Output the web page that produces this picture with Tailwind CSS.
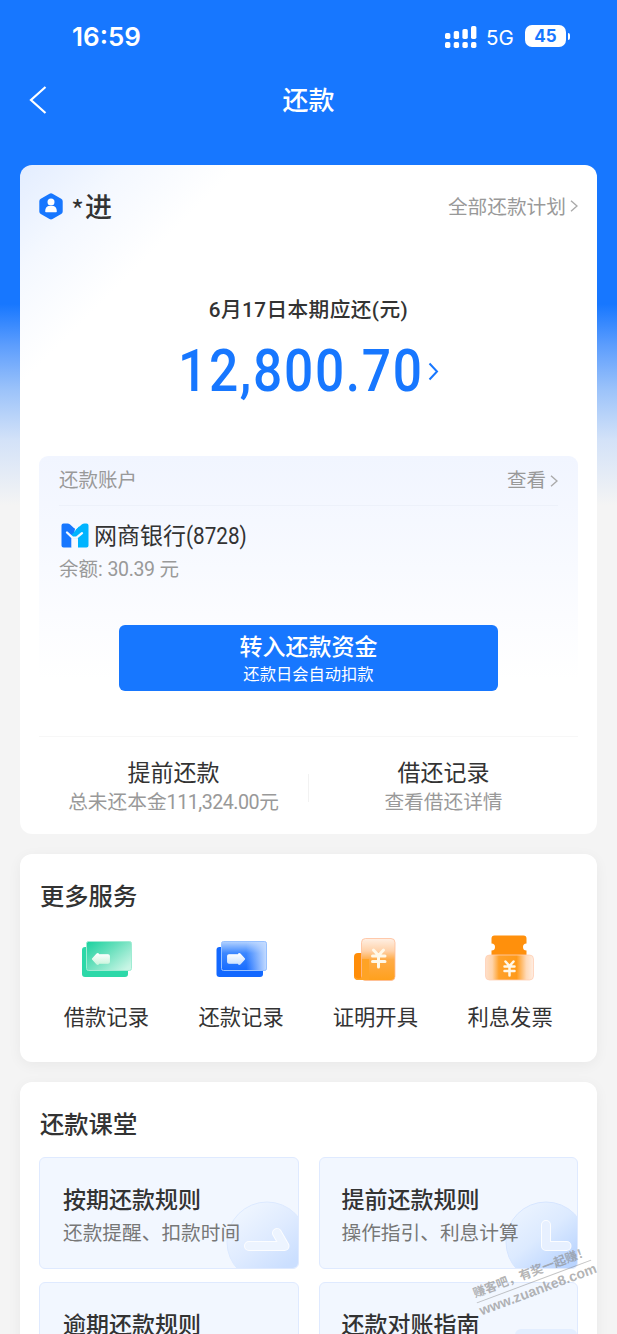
<!DOCTYPE html>
<html lang="zh-CN">
<head>
<meta charset="utf-8">
<meta name="viewport" content="width=device-width, initial-scale=1">
<title>还款</title>
<script src="https://cdn.jsdelivr.net/npm/@tailwindcss/browser@4"></script>
</head>
<body class="h-[1334px] overflow-hidden bg-[#f4f4f4] font-['Roboto','Noto_Sans_CJK_SC',sans-serif] text-[#333]">
<div class="relative h-[1334px] w-[617px] overflow-hidden bg-[linear-gradient(to_bottom,#1777ff_0px,#1777ff_304px,#5c9dfd_345px,#9cc3fa_390px,#d3e2f8_440px,#f4f4f4_505px)]">

  <!-- status bar -->
  <header class="flex h-[74px] items-center justify-between pr-[47px] pl-[72px] text-white">
    <div class="font-['Inter'] text-[26px] leading-[30px] font-semibold">16:59</div>
    <div class="flex items-center">
      <svg class="mt-[-3px] h-6 w-[34px]" viewBox="0 0 34 24" fill="#fff">
        <rect x="1" y="9" width="5.4" height="6" rx="1.7"/><rect x="9.700" y="7" width="5.400" height="8" rx="1.700"/><rect x="18.400" y="5" width="5.400" height="10" rx="1.700"/><rect x="27" y="2" width="5.400" height="13" rx="1.700"/>
        <rect x="1" y="18" width="5.400" height="6" rx="1.700"/><rect x="9.700" y="18" width="5.400" height="6" rx="1.700"/><rect x="18.400" y="18" width="5.400" height="6" rx="1.700"/><rect x="27" y="18" width="5.400" height="6" rx="1.700"/>
      </svg>
      <span class="mt-[2px] ml-[8px] w-[39px] font-['Inter'] text-[20.500px] leading-6">5G</span>
      <span class="mt-[-2px] flex h-[22px] w-[41px] items-center justify-center rounded-[7px] bg-white font-['Inter'] text-[17px] leading-none font-bold text-[#1777ff]">45</span>
      <span class="mt-[-1px] ml-[2px] h-[7px] w-[2px] rounded-r-full bg-white"></span>
    </div>
  </header>

  <!-- navigation -->
  <nav class="grid h-[52px] grid-cols-[60px_1fr_60px] items-center text-white">
    <svg class="mt-[-1px] ml-[29px] h-[28px] w-[18px]" viewBox="0 0 18 28" fill="none" stroke="#fff" stroke-width="2.200"><path d="M16.500 1 2 14l14.500 13"/></svg>
    <h1 class="mt-[2px] text-center text-[26px] leading-8 font-medium">还款</h1>
  </nav>

  <main class="mx-5 mt-[39px] flex flex-col gap-5">
    <!-- bill card -->
    <section class="h-[669px] rounded-[12px] bg-white bg-[linear-gradient(135deg,#e3edff_0px,#f4f8ff_75px,#ffffff_155px)] px-[19px]">
      <div class="flex h-[82px] items-center justify-between">
        <div class="flex items-center">
          <svg class="h-[27px] w-6" viewBox="0 0 24 27"><path d="M10.500.8a3 3 0 0 1 3 0l8.700 4.900a3 3 0 0 1 1.500 2.600v10.100a3 3 0 0 1-1.500 2.600l-8.700 5a3 3 0 0 1-3 0l-8.700-5a3 3 0 0 1-1.500-2.600V8.300a3 3 0 0 1 1.500-2.600z" fill="#1777ff"/><circle cx="12" cy="9" r="3.500" fill="#fff"/><path d="M6.200 18.500c0-3.800 2-5.400 4-5.400h3.600c2 0 4 1.600 4 5.400q0 .7-.8.700H7q-.8 0-.8-.7z" fill="#fff"/></svg>
          <span class="ml-[8px] flex items-center font-['Noto_Sans_CJK_SC'] text-[27px] leading-8 font-medium"><span class="mt-[6px] w-[14px] text-[28px] font-normal">*</span><span>进</span></span>
        </div>
        <a class="flex items-center text-[19.700px] leading-6 text-[#999]"><span class="mt-[3px]">全部还款计划</span><svg class="ml-1 h-3 w-2" viewBox="0 0 8 12" fill="none" stroke="#aaa" stroke-width="1.400"><path d="m1 .7 6 5.300-6 5.300"/></svg></a>
      </div>

      <div class="mt-[49px] flex h-7 items-center justify-center text-[20.700px] leading-7 font-medium tracking-[0.4px]">6月17日本期应还(元)</div>
      <div class="mt-[14px] flex h-[66px] items-center justify-center text-[#1777ff]">
        <span class="w-[245px] text-[58.500px] leading-[66px] font-medium whitespace-nowrap"><span class="inline-block origin-left scale-x-[0.88] tracking-[1.900px]">12,800.70</span></span>
        <svg class="ml-[5px] h-[19px] w-[11px]" viewBox="0 0 11 19" fill="none" stroke="#1777ff" stroke-width="2"><path d="m1.500 1.500 7.500 8-7.500 8"/></svg>
      </div>

      <div class="mt-[52px] flex h-[281px] flex-col rounded-t-[9px] border-b border-[#f7f7f7] bg-linear-to-b from-[#f1f5ff] to-white to-80% px-5">
        <div class="flex h-[50px] items-center justify-between border-b border-[#edf1fa] text-[19.500px] leading-6 text-[#999]">
          <span class="mt-[1px]">还款账户</span>
          <a class="flex items-center"><span class="mt-[1px]">查看</span><svg class="ml-1 h-3 w-2" viewBox="0 0 8 12" fill="none" stroke="#aaa" stroke-width="1.400"><path d="m1 .7 6 5.300-6 5.300"/></svg></a>
        </div>
        <div class="mt-[13px] flex h-8 items-center">
          <svg class="mr-[5px] ml-[2px] h-[25px] w-[28px]" viewBox="0 0 28 25">
            <path d="M2.500.5h4q1.500 0 2.600 1L14 6 6 9q3 3 4.500 6v9.500h-8Q.500 24.500.500 22.500v-20q0-2 2-2z" fill="#1777ff"/>
            <path d="M14.500 7 21 1.300q1-.8 2.500-.8h2q2 0 2 2v20q0 2-2 2h-8.500V15z" fill="#00b4ff"/>
            <path d="M4 8 14 5.500l-1 6-3 4z" fill="#1777ff"/><path d="M10 12.500 18 3.500l7 4-6.500 8h-6z" fill="#00b4ff"/>
            <path d="m6 9.500 5.500 5.200M11.500 14.700h4l5.500-4.500" fill="none" stroke="#f6f9ff" stroke-width="2.300" stroke-linecap="round" stroke-linejoin="round"/>
            <path d="M10.600 15.500h6.400v9h-6.400z" fill="#f6f9ff"/>
          </svg>
          <span class="mt-[3px] flex text-[23px] leading-8">网商银行<span class="origin-left scale-x-[0.9]">(8728)</span></span>
        </div>
        <div class="mt-[7px] text-[19.500px] leading-6 text-[#999]">余额: <span class="tracking-[-0.400px]">30.39</span> 元</div>
        <button class="mx-auto mt-[43px] flex h-[66px] w-[379px] flex-col items-center rounded-[6px] bg-[#1777ff] text-white">
          <span class="mt-[8px] text-[23px] leading-[30px] font-medium">转入还款资金</span>
          <span class="mt-[2px] text-[16.300px] leading-5">还款日会自动扣款</span>
        </button>
      </div>

      <div class="grid grid-cols-[269px_1px_1fr] text-center">
        <div class="pt-[22px]">
          <div class="text-[23px] leading-[30px]">提前还款</div>
          <div class="mt-[2px] text-[19.700px] leading-6 text-[#999]">总未还本金<span class="tracking-[-0.500px]">111,324.00</span>元</div>
        </div>
        <div class="mt-[37px] h-7 bg-[#f2f2f2]"></div>
        <div class="pt-[22px]">
          <div class="text-[23px] leading-[30px]">借还记录</div>
          <div class="mt-[2px] text-[19.700px] leading-6 text-[#999]">查看借还详情</div>
        </div>
      </div>
    </section>

    <!-- services -->
    <section class="h-[208px] rounded-[12px] bg-white px-[19px] pt-[28px] shadow-[0_3px_14px_rgba(0,0,0,0.05)]">
      <h2 class="ml-[1px] text-[24.300px] leading-[30px] font-medium">更多服务</h2>
      <div class="mt-[18px] grid grid-cols-4 text-[21.300px] leading-7">
        <div class="flex flex-col items-center">
          <svg class="h-[56px] w-[60px]" viewBox="0 0 60 56"><defs>
            <linearGradient id="g1" x1="0" y1="0" x2="1" y2=".8"><stop offset="0" stop-color="#19d29f"/><stop offset=".45" stop-color="#65dfbb"/><stop offset="1" stop-color="#c8f5e5"/></linearGradient>
            <linearGradient id="w1" x1="0" y1="0" x2="0" y2="1"><stop stop-color="#fff"/><stop offset="1" stop-color="#c9f5dd"/></linearGradient></defs>
            <rect x="6" y="17" width="46" height="30" rx="3" fill="#2cd8a8"/><rect x="10.500" y="11.500" width="45" height="29" rx="2" fill="url(#g1)" stroke="#9fecd3" stroke-width="1"/>
            <path d="m16.500 29 4.500-5q1.500-1 1.500.8h9.500q1.300 0 1.300 1.200v6q0 1.200-1.300 1.200h-9.500q0 1.800-1.500.8z" fill="url(#w1)" stroke="url(#w1)" stroke-width="1.200" stroke-linejoin="round"/></svg>
          <span class="mt-[18px]">借款记录</span>
        </div>
        <div class="flex flex-col items-center">
          <svg class="h-[56px] w-[60px]" viewBox="0 0 60 56"><defs>
            <linearGradient id="g2" x1="0" y1="0" x2="0" y2="1"><stop stop-color="#b5d3ff"/><stop offset=".4" stop-color="#3c87ff"/><stop offset="1" stop-color="#176bff"/></linearGradient>
            <linearGradient id="h2"><stop offset=".55" stop-color="#c4dbff" stop-opacity="0"/><stop offset="1" stop-color="#c4dbff"/></linearGradient>
            <linearGradient id="w2" x1="0" y1="0" x2="0" y2="1"><stop stop-color="#fff"/><stop offset="1" stop-color="#cbe1ff"/></linearGradient></defs>
            <rect x="5.500" y="17" width="46.500" height="30" rx="3" fill="#1268ff"/><rect x="10.500" y="11.500" width="45" height="29" rx="2" fill="url(#g2)"/><rect x="10.500" y="11.500" width="45" height="29" rx="2" fill="url(#h2)" stroke="#98c1ff" stroke-width="1"/>
            <path d="m33.500 29-4.500-5q-1.500-1-1.500.8H18q-1.300 0-1.300 1.200v6q0 1.200 1.300 1.200h9.500q0 1.800 1.500.8z" fill="url(#w2)" stroke="url(#w2)" stroke-width="1.200" stroke-linejoin="round"/></svg>
          <span class="mt-[18px]">还款记录</span>
        </div>
        <div class="flex flex-col items-center">
          <svg class="mr-[1px] h-[56px] w-[60px]" viewBox="0 0 60 56"><defs>
            <linearGradient id="g3" x1="0" y1="0" x2="0" y2="1"><stop stop-color="#fff0e5"/><stop offset=".3" stop-color="#ffd1a8"/><stop offset=".5" stop-color="#ffac48"/><stop offset="1" stop-color="#ffa01c"/></linearGradient></defs>
            <rect x="9" y="23" width="25" height="27" rx="4" fill="#ff8d08"/><rect x="16.500" y="8.500" width="33.500" height="42" rx="4" fill="url(#g3)" stroke="#ffbd98" stroke-width=".8"/><path d="M9 46q1 4 5 4h10V29h-7v18q-2 3-6 1z" fill="#ffa325"/>
            <path d="m28.500 20 5 5.500 5-5.500M33.500 26v11M27.500 26h12.500M27.500 31.500h12.500" fill="none" stroke="#fff8e8" stroke-width="3" stroke-linecap="round"/></svg>
          <span class="mt-[18px] mr-[1px]">证明开具</span>
        </div>
        <div class="flex flex-col items-center">
          <svg class="mr-[1px] h-[56px] w-[60px]" viewBox="0 0 60 56"><defs>
            <linearGradient id="g4"><stop stop-color="#ffdfca"/><stop offset=".14" stop-color="#ffd4aa"/><stop offset=".28" stop-color="#ffa12a"/><stop offset=".65" stop-color="#ff9a19"/><stop offset=".85" stop-color="#ffdab8"/><stop offset="1" stop-color="#ffeee4"/></linearGradient></defs>
            <path d="M14.500 5.500h29q3 0 3 3v5a3.500 3.500 0 0 0 0 7v24h-35v-24a3.500 3.500 0 0 0 0-7v-5q0-3 3-3z" fill="#ff900c"/>
            <rect x="5.500" y="25" width="48" height="25" rx="4" fill="url(#g4)" stroke="#ffcfb5" stroke-width=".8"/>
            <path d="m25.500 31.500 4 4.500 4-4.500M29.500 36v9.500M24.500 36.500h10M24.500 41h10" fill="none" stroke="#fff8e8" stroke-width="2.500" stroke-linecap="round"/></svg>
          <span class="mt-[18px] mr-[1px]">利息发票</span>
        </div>
      </div>
    </section>

    <!-- lessons -->
    <section class="h-[330px] rounded-[12px] bg-white px-[19px] pt-[28px] shadow-[0_3px_14px_rgba(0,0,0,0.05)]">
      <h2 class="ml-[1px] text-[24.300px] leading-[30px] font-medium">还款课堂</h2>
      <div class="mt-[17px] grid grid-cols-2 gap-x-5 gap-y-[13px]">
        <article class="relative h-[112px] overflow-hidden rounded-[6px] border border-[#dfeaff] bg-[#f2f7ff] pt-[28px] pl-[23px]">
          <svg class="absolute right-[-1px] bottom-[-1px] h-[68px] w-[74px]" viewBox="0 0 74 68"><defs><linearGradient id="c1" x1=".2" y1=".1" x2=".75" y2=".8"><stop stop-color="#eef5ff"/><stop offset=".5" stop-color="#dfebff"/><stop offset="1" stop-color="#cbdfff"/></linearGradient></defs>
            <circle cx="42" cy="41" r="40" fill="url(#c1)" stroke="#dce9ff"/><path d="M24 45H59.500L52 32" fill="none" stroke="#fcfdff" stroke-width="10" stroke-linecap="round" stroke-linejoin="round"/><path d="M24 45H59.500L52 32" fill="none" stroke="#edf4ff" stroke-width="8" stroke-linecap="round" stroke-linejoin="round"/></svg>
          <h3 class="relative text-[23px] leading-[30px] font-medium">按期还款规则</h3>
          <p class="relative mt-[6px] text-[19.700px] leading-6 text-[#777]">还款提醒、扣款时间</p>
        </article>
        <article class="relative h-[112px] overflow-hidden rounded-[6px] border border-[#dfeaff] bg-[#f2f7ff] pt-[28px] pl-[22px]">
          <svg class="absolute right-[-1px] bottom-[-1px] h-[68px] w-[74px]" viewBox="0 0 74 68"><defs><linearGradient id="c2" x1=".2" y1=".1" x2=".75" y2=".8"><stop stop-color="#e9f2ff"/><stop offset=".45" stop-color="#dceaff"/><stop offset="1" stop-color="#b9d4ff"/></linearGradient></defs>
            <circle cx="42" cy="41" r="40" fill="url(#c2)" stroke="#d6e5ff"/><path d="M42 24V45H62.500" fill="none" stroke="#fcfdff" stroke-width="10" stroke-linecap="round" stroke-linejoin="round"/><path d="M42 24V45H62.500" fill="none" stroke="#e7f0ff" stroke-width="8" stroke-linecap="round" stroke-linejoin="round"/></svg>
          <h3 class="relative text-[23px] leading-[30px] font-medium">提前还款规则</h3>
          <p class="relative mt-[6px] text-[19.700px] leading-6 text-[#777]">操作指引、利息计算</p>
        </article>
        <article class="h-[112px] rounded-[6px] border border-[#dfeaff] bg-[#f2f7ff] pt-[28px] pl-[23px]">
          <h3 class="text-[23px] leading-[30px] font-medium">逾期还款规则</h3>
        </article>
        <article class="relative h-[112px] overflow-hidden rounded-[6px] border border-[#dfeaff] bg-[#f2f7ff] pt-[28px] pl-[22px]">
          <div class="absolute right-0 bottom-0 h-[64px] w-[62px] rounded-t-[6px] bg-[#e3eeff]"></div>
          <h3 class="relative text-[23px] leading-[30px] font-medium">还款对账指南</h3>
        </article>
      </div>
    </section>
  </main>

  <!-- watermark -->
  <div class="absolute top-[1264px] left-[473px] w-[122px] rotate-[-20.500deg] text-center font-bold text-[#8a8a8a]/65">
    <div class="border-b border-[#8a8a8a]/50 text-[12.300px] leading-[17px] whitespace-nowrap">赚客吧，有奖一起赚！</div>
    <div class="font-['Liberation_Sans'] text-[14px] leading-[17px] whitespace-nowrap">www.zuanke8.com</div>
  </div>
</div>
</body>
</html>
